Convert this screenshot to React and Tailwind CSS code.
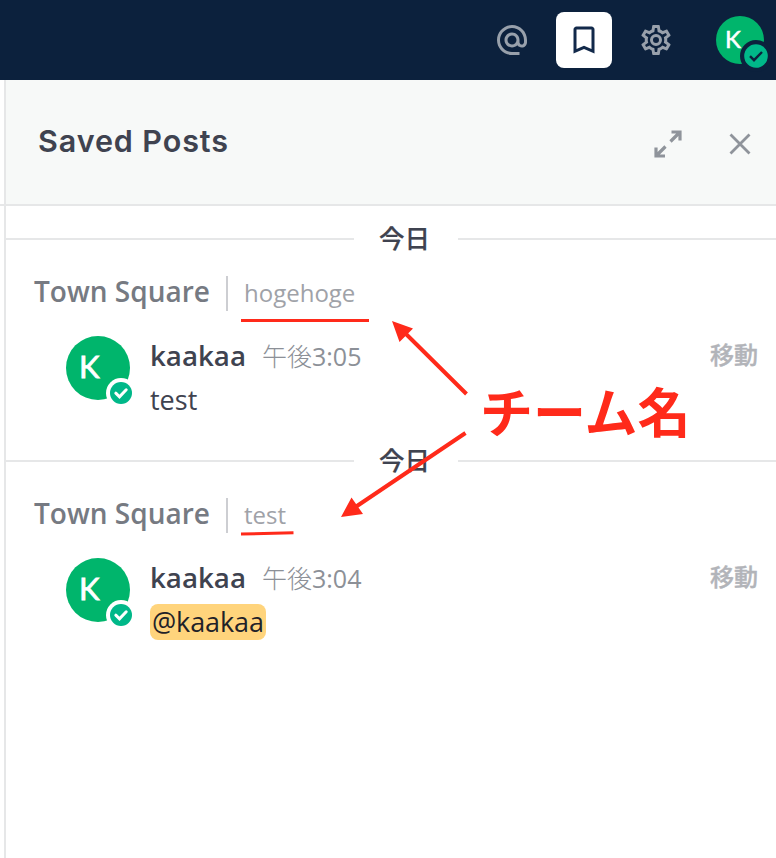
import { MdAlternateEmail, MdBookmarkBorder } from "react-icons/md";

const COG =
  "M12,8A4,4 0 0,1 16,12A4,4 0 0,1 12,16A4,4 0 0,1 8,12A4,4 0 0,1 12,8M12,10A2,2 0 0,0 10,12A2,2 0 0,0 12,14A2,2 0 0,0 14,12A2,2 0 0,0 12,10M10,22C9.75,22 9.54,21.82 9.5,21.58L9.13,18.93C8.5,18.68 7.96,18.34 7.44,17.94L4.95,18.95C4.73,19.03 4.46,18.95 4.34,18.73L2.34,15.27C2.21,15.05 2.27,14.78 2.46,14.63L4.57,12.97L4.5,12L4.57,11L2.46,9.37C2.27,9.22 2.21,8.95 2.34,8.73L4.34,5.27C4.46,5.05 4.73,4.96 4.95,5.05L7.44,6.05C7.96,5.66 8.5,5.32 9.13,5.07L9.5,2.42C9.54,2.18 9.75,2 10,2H14C14.25,2 14.46,2.18 14.5,2.42L14.87,5.07C15.5,5.32 16.04,5.66 16.56,6.05L19.05,5.05C19.27,4.96 19.54,5.05 19.66,5.27L21.66,8.73C21.79,8.95 21.73,9.22 21.54,9.37L19.43,11L19.5,12L19.43,13L21.54,14.63C21.73,14.78 21.79,15.05 21.66,15.27L19.66,18.73C19.54,18.95 19.27,19.04 19.05,18.95L16.56,17.95C16.04,18.34 15.5,18.68 14.87,18.93L14.5,21.58C14.46,21.82 14.25,22 14,22H10M11.25,4L10.88,6.61C9.68,6.86 8.62,7.5 7.85,8.39L5.44,7.35L4.69,8.65L6.8,10.2C6.4,11.37 6.4,12.64 6.8,13.8L4.68,15.36L5.43,16.66L7.86,15.62C8.63,16.5 9.68,17.14 10.87,17.38L11.24,20H12.76L13.13,17.39C14.32,17.14 15.37,16.5 16.14,15.62L18.57,16.66L19.32,15.36L17.2,13.81C17.6,12.64 17.6,11.37 17.2,10.2L19.31,8.65L18.56,7.35L16.15,8.39C15.38,7.5 14.32,6.86 13.12,6.62L12.75,4H11.25Z";

function TopBar() {
  return (
    <header className="flex h-20 items-center justify-end bg-[#0c213d] pr-3">
      <button className="flex size-14 items-center justify-center pb-px text-[#98a0ab]">
        <MdAlternateEmail className="size-9" />
      </button>
      <button className="ml-4 flex size-14 items-center justify-center rounded-lg bg-white pb-px text-[#12294a]">
        <MdBookmarkBorder className="size-9" />
      </button>
      <button className="ml-4 flex size-14 items-center justify-center pb-px text-[#98a0ab]">
        <svg viewBox="0 0 24 24" className="size-9" fill="currentColor">
          <path d={COG} />
        </svg>
      </button>
      <div className="relative ml-8 size-12 rounded-full bg-[#00b56c]">
        <span className="absolute left-[9px] top-[8px] font-[Lato] text-[24px] leading-[30px] text-white [-webkit-text-stroke:0.5px_white]">
          K
        </span>
        <svg viewBox="0 0 32 32" className="absolute -bottom-2 -right-2 size-8">
          <circle cx="16" cy="16" r="16" fill="#0c213d" />
          <circle cx="16" cy="16" r="11.8" fill="#00b889" />
          <path d="M10 16.2l4 4 8-8.2" fill="none" stroke="#0c213d" strokeWidth="2.4" />
        </svg>
      </div>
    </header>
  );
}

function PanelHeader() {
  return (
    <div className="flex h-[126px] items-center justify-between border-b-2 border-[#e6e7e8] bg-[#f7f9f8] pl-8 pr-[25px] pt-[3px]">
      <h1 className="-mt-[5px] font-[Inter] text-[30.5px] font-semibold leading-9 tracking-[0.9px] text-[#3f4350]">
        Saved Posts
      </h1>
      <div className="flex items-center gap-[47px] text-[#8f949b]">
        <svg viewBox="0 0 28 28" className="size-7" fill="none" stroke="currentColor" strokeWidth="3.2">
          <path d="M17.500 2H26v8.500M25.500 2.500L16.500 11.500M2 17.500V26h9M2.500 25.500l9-9" />
        </svg>
        <svg viewBox="0 0 22 22" className="size-[22px]" fill="none" stroke="currentColor" strokeWidth="2.8">
          <path d="M1.500 1.500l19 19M20.500 1.500l-19 19" />
        </svg>
      </div>
    </div>
  );
}

function DateSeparator() {
  return (
    <div className="flex h-10 items-center">
      <div className="h-0.5 w-[348px] bg-[#e6e7e8]" />
      <span className="w-[104px] pb-1 pr-[3px] text-center text-[25.5px] font-medium leading-9 text-[#3f4350] [-webkit-text-stroke:0.2px_#3f4350] font-['Noto_Sans_CJK_JP',sans-serif]">
        今日
      </span>
      <div className="h-0.5 flex-1 bg-[#e6e7e8]" />
    </div>
  );
}

function Avatar() {
  return (
    <div className="relative mt-px size-16 shrink-0 rounded-full bg-[#00b56c]">
      <span className="absolute left-[13px] top-[11px] font-[Lato] text-[31px] leading-[38px] text-white [-webkit-text-stroke:0.8px_white]">
        K
      </span>
      <svg viewBox="0 0 30 30" className="absolute -bottom-2 -right-[6px] size-[30px]">
        <circle cx="15" cy="15" r="15" fill="white" />
        <circle cx="15" cy="15" r="11" fill="#00b889" />
        <path d="M9.800 15.200l3.700 3.600 6.700-7" fill="none" stroke="white" strokeWidth="3" strokeLinecap="round" />
      </svg>
    </div>
  );
}

function Post({ team, time, children }) {
  return (
    <article className="h-[222px] font-['Open_Sans','Noto_Sans_CJK_JP',sans-serif]">
      <DateSeparator />
      <div className="mt-4 flex h-[37px] items-center pl-7">
        <span className="w-[192px] whitespace-nowrap pb-[5px] text-[28px] font-semibold leading-9 text-[#767a82]">
          Town Square
        </span>
        <span className="h-[35px] w-0.5 bg-[#cdced2]" />
        <span className="pb-0.5 pl-4 text-[24px] leading-9 text-[#9fa2a8]">{team}</span>
      </div>
      <div className="mt-[23px] flex pl-[60px] pr-[18px]">
        <Avatar />
        <div className="ml-5 flex-1">
          <div className="flex h-10 items-center">
            <span className="pt-0.5 text-[27.700px] font-semibold text-[#3f4350]">kaakaa</span>
            <span className="ml-4 flex items-baseline pt-1 text-[25px] text-[#8c9097]">
              <span className="font-light">午後</span>
              <span>{time}</span>
            </span>
            <span className="ml-auto text-[24px] font-medium text-[#b2b4b9] [-webkit-text-stroke:0.4px_#b2b4b9]">移動</span>
          </div>
          <p className="mt-[7px] text-[27px] leading-9 text-[#3f4350]">{children}</p>
        </div>
      </div>
    </article>
  );
}

function Annotations() {
  return (
    <div className="pointer-events-none absolute inset-0 text-[#ff2a1a]">
      <svg viewBox="0 0 776 858" className="absolute inset-0 h-full w-full" fill="currentColor" stroke="currentColor">
        <path d="M241 320.500H369M241 534L293.500 532.700" strokeWidth="3" />
        <path d="M466.500 394L404 332M465.500 433L354 508" strokeWidth="4" />
        <path d="M392 321L413 328.500L399.500 342ZM341 517L351.500 497.500L363 514Z" stroke="none" />
      </svg>
      <span className="absolute left-[480px] top-[370px] whitespace-nowrap text-[53px] font-bold leading-[80px] font-['Noto_Sans_CJK_JP',sans-serif]">
        チーム名
      </span>
    </div>
  );
}

export default function App() {
  return (
    <div className="relative h-[858px] w-[776px] overflow-hidden bg-white">
      <TopBar />
      <div className="flex h-[778px]">
        <div className="w-1 shrink-0">
          <div className="h-[126px] border-b-2 border-[#e6e7e8]" />
        </div>
        <main className="flex-1 border-l-2 border-[#e6e7e8]">
          <PanelHeader />
          <div className="pt-[13px]">
            <Post team="hogehoge" time="3:05">
              test
            </Post>
            <Post team="test" time="3:04">
              <span className="inline-block rounded-lg bg-[#ffd47c] px-0.5 tracking-[-0.1px] text-[#1f2228]">@kaakaa</span>
            </Post>
          </div>
        </main>
      </div>
      <Annotations />
    </div>
  );
}
